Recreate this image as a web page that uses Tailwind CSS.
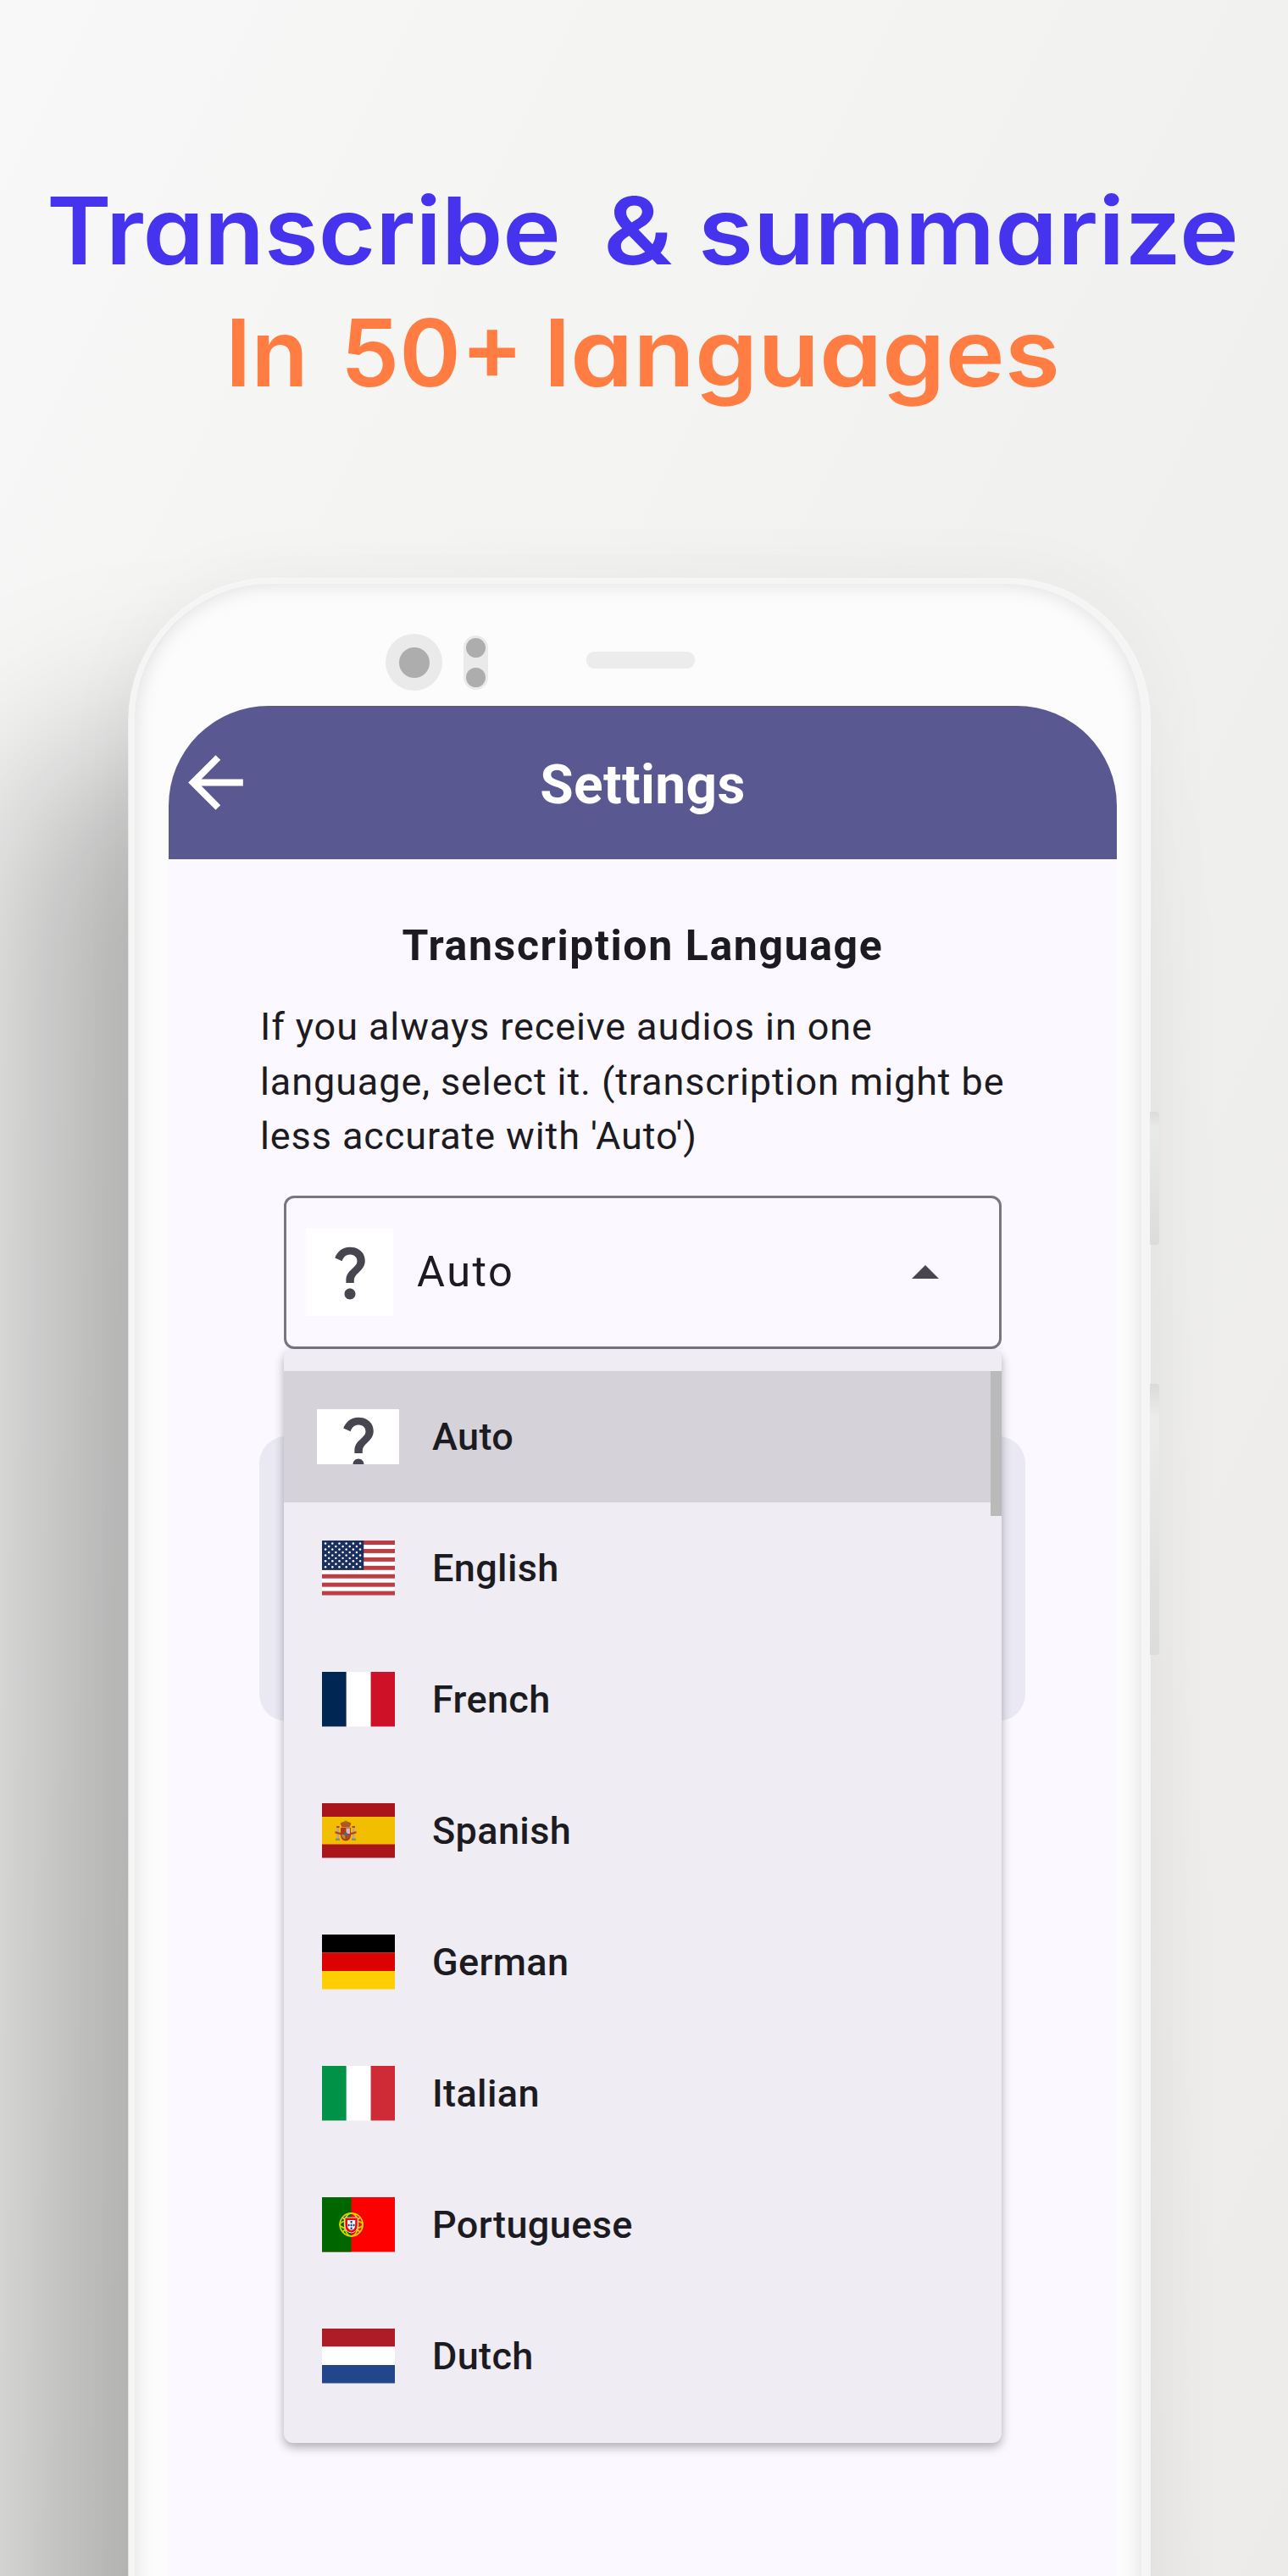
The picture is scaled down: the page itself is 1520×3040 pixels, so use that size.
<!DOCTYPE html>
<html lang="en">
<head>
<meta charset="utf-8">
<title>Settings</title>
<script src="https://cdn.jsdelivr.net/npm/@tailwindcss/browser@4"></script>
</head>
<body class="w-[1520px] h-[3040px] overflow-hidden bg-linear-to-br from-[#f8f8f8] via-[#f1f1ef] to-[#ecebe9] font-['Roboto',sans-serif] text-[#1b1b21]">
<div class="flex flex-col items-center h-[3040px] overflow-hidden relative">
  <header class="h-[683px] w-full shrink-0 pt-[200px] text-[110px] leading-[144px] font-semibold font-['Inter',sans-serif] [font-feature-settings:'cv11'] whitespace-nowrap">
    <h1 class="flex pl-[55px] text-[#4633ed]">
      <span class="w-[657px]"><span class="inline-block origin-left scale-x-[1.055]">Transcribe</span></span>
      <span class="w-[112px]"><span class="inline-block origin-left scale-x-[1.12]">&amp;</span></span>
      <span class="inline-block origin-left scale-x-[1.075]">summarize</span>
    </h1>
    <h2 class="flex pl-[266px] text-[#ff7d42]">
      <span class="w-[136px]">In</span>
      <span class="w-[240px]">50+</span>
      <span class="inline-block origin-left scale-x-[1.08]">languages</span>
    </h2>
  </header>

  <main class="relative ml-[-11px] w-[1205px] h-[2900px] shrink-0 rounded-t-[168px] border-t-[6px] border-l-[7px] border-r-[10px] border-[#f5f5f5] bg-[#fcfcfc] shadow-[0_0_0_1px_rgba(255,255,255,0.6),0_0_90px_rgba(0,0,0,0.045),-145px_190px_210px_rgba(0,0,0,0.26)]">
    <div class="absolute -right-[21px] top-[623px] w-[11px] h-[157px] rounded-r bg-linear-to-b from-[#dcdcdc] via-[#e9eaea] via-12% to-[#dcdcdc]"></div>
    <div class="absolute -right-[21px] top-[944px] w-[11px] h-[320px] rounded-r bg-linear-to-b from-[#dadada] via-[#ececec] via-12% to-[#dcdcdc]"></div>
    <div class="h-full rounded-t-[160px] shadow-[inset_0_0_24px_rgba(0,0,0,0.13)] pl-10 pr-[29px]">
      <div class="h-[144px] relative">
        <div class="absolute left-[256px] top-[59px] size-[67px] rounded-full bg-[#eaeaea] flex items-center justify-center"><div class="size-9 rounded-full bg-[#adadad]"></div></div>
        <div class="absolute left-[348px] top-[61px] w-[29px] h-16 rounded-full bg-[#eaeaea] flex flex-col items-center justify-between py-[3px]"><div class="size-[23px] rounded-full bg-[#adadad]"></div><div class="size-[23px] rounded-full bg-[#adadad]"></div></div>
        <div class="absolute left-[493px] top-20 w-32 h-5 rounded-[9px] bg-[#ececec]"></div>
      </div>
      <section class="w-[1119px] h-[2700px] rounded-t-[118px] overflow-hidden bg-[#fbf8ff]">
        <div class="h-[181px] bg-[#5a5891] text-white flex items-center relative">
          <svg class="size-[97px] ml-[7px]" viewBox="0 0 24 24" fill="#fff"><path d="M20 11H7.83l5.59-5.59L12 4l-8 8 8 8 1.41-1.41L7.83 13H20z"/></svg>
          <div class="absolute inset-0 flex justify-center pt-[56px] text-[64px] leading-[76px] font-bold tracking-[0.4px]"><span>Settings</span></div>
        </div>
        <div class="pt-[62px] px-[107px]">
          <h3 class="text-center text-[50px] leading-[80px] font-bold tracking-[1.6px]">Transcription Language</h3>
          <p class="mt-6 ml-px text-[45px] leading-[64.6px] whitespace-nowrap tracking-[0.9px]">If you always receive audios in one<br>language, select it. (transcription might be<br>less accurate with 'Auto')</p>
        </div>
        <div class="relative mt-[37px] ml-[136px] w-[847px]">
          <div class="absolute left-[-29px] top-[284px] w-[904px] h-[336px] rounded-[32px] bg-[#eae8f3]"></div>
          <div class="relative h-[181px] rounded-[12px] border-[3.5px] border-[#787680] flex items-center pl-[23px] pr-[71px]">
            <div class="size-[103px] bg-white flex items-center justify-center">
              <svg class="size-[78px]" viewBox="0 0 24 24" fill="#47464f"><path d="M11.07 12.85c.77-1.39 2.25-2.21 3.11-3.44.91-1.29.4-3.7-2.18-3.7-1.69 0-2.52 1.28-2.87 2.34L6.54 6.96C7.25 4.83 9.18 3 11.99 3c2.35 0 3.96 1.07 4.78 2.41.7 1.15 1.11 3.3.03 4.9-1.2 1.77-2.35 2.31-2.97 3.45-.25.46-.35.76-.35 2.24h-2.89c-.01-.78-.13-2.05.48-3.15zM14 20c0 1.1-.9 2-2 2s-2-.9-2-2 .9-2 2-2 2 .9 2 2z"/></svg>
            </div>
            <span class="ml-[28px] text-[50.5px] tracking-[2.5px]">Auto</span>
            <svg class="ml-auto w-8 h-4" viewBox="0 0 10 5" fill="#47464f"><path d="M0 5l5-5 5 5z"/></svg>
          </div>
          <ul class="relative h-[1291px] pt-[26.5px] rounded-[11px] bg-[#efecf3] shadow-[0_5px_12px_rgba(0,0,0,0.3)] text-[45px] font-medium tracking-[0.4px]">
            <li class="h-[155px] bg-[#d5d2d9] flex items-center pl-[39px]">
              <div class="w-[97px] h-[65px] bg-white overflow-hidden flex justify-center">
                <svg class="size-[78px] shrink-0" viewBox="0 0 24 24" fill="#47464f"><path d="M11.07 12.85c.77-1.39 2.25-2.21 3.11-3.44.91-1.29.4-3.7-2.18-3.7-1.69 0-2.52 1.28-2.87 2.34L6.54 6.96C7.25 4.83 9.18 3 11.99 3c2.35 0 3.96 1.07 4.78 2.41.7 1.15 1.11 3.3.03 4.9-1.2 1.77-2.35 2.31-2.97 3.45-.25.46-.35.76-.35 2.24h-2.89c-.01-.78-.13-2.05.48-3.15zM14 20c0 1.1-.9 2-2 2s-2-.9-2-2 .9-2 2-2 2 .9 2 2z"/></svg>
              </div><span class="ml-[39px]">Auto</span></li>
            <li class="h-[155px] flex items-center pl-[44.5px]"><svg id="us" class="w-[86.4px] h-[64.6px]" viewBox="0 0 86 65" preserveAspectRatio="none"></svg><span class="ml-[44px]">English</span></li>
            <li class="h-[155px] flex items-center pl-[44.5px]"><svg class="w-[86.4px] h-[64.6px]" viewBox="0 0 3 2" preserveAspectRatio="none"><path fill="#002654" d="M0 0h1v2H0z"/><path fill="#fff" d="M1 0h1v2H1z"/><path fill="#ce1126" d="M2 0h1v2H2z"/></svg><span class="ml-[44px]">French</span></li>
            <li class="h-[155px] flex items-center pl-[44.5px]"><svg class="w-[86.4px] h-[64.6px]" viewBox="0 0 86.4 64.6"><path fill="#aa151b" d="M0 0h86.4v64.6H0z"/><path fill="#f1bf00" d="M0 16h86.4v32.5H0z"/>
              <path fill="#c4a38a" d="M17.500 28h2.500v16h-2.500zM36 28h2.500v16H36z"/><path fill="#b5452f" d="M15.500 33l7 2v2.500l-7-2zM33.500 35l7-2v2.500l-7 2zM17 27h3.500v2H17zM35.500 27H39v2h-3.500z"/><path fill="#8f8f70" d="M16 41.500h5V44h-5zM35 41.500h5V44h-5z"/><path fill="#b5541f" d="M22 25q-1-2 2-2.500l4-1.500 4 1.500q3 .5 2 2.500l-1.500 3.500h-9z"/><path fill="#8c7a2a" d="M27.200 20.500h1.600v4h-1.600z"/><path fill="#ad3a20" d="M22 29h12v9.500q-1 6-6 6t-6-6z"/><path fill="#d6b9c6" d="M28.500 29.500H33V36h-4.500z"/><path fill="#c08a20" d="M23 37h4.500v5.500q-4-1-4.500-5.500z"/><path fill="#a84a38" d="M29 37h4q0 4-4 6z"/><circle cx="28" cy="36.300" r="2" fill="#3f6a8c"/></svg><span class="ml-[44px]">Spanish</span></li>
            <li class="h-[155px] flex items-center pl-[44.5px]"><svg class="w-[86.4px] h-[64.6px]" viewBox="0 0 3 3" preserveAspectRatio="none"><path d="M0 0h3v1H0z"/><path fill="#d00" d="M0 1h3v1H0z"/><path fill="#ffce00" d="M0 2h3v1H0z"/></svg><span class="ml-[44px]">German</span></li>
            <li class="h-[155px] flex items-center pl-[44.5px]"><svg class="w-[86.4px] h-[64.6px]" viewBox="0 0 3 2" preserveAspectRatio="none"><path fill="#009246" d="M0 0h1v2H0z"/><path fill="#fff" d="M1 0h1v2H1z"/><path fill="#ce2b37" d="M2 0h1v2H2z"/></svg><span class="ml-[44px]">Italian</span></li>
            <li class="h-[155px] flex items-center pl-[44.5px]"><svg class="w-[86.4px] h-[64.6px]" viewBox="0 0 86.4 64.6"><path fill="#f00" d="M0 0h86.4v64.6H0z"/><path fill="#060" d="M0 0h34.600v64.6H0z"/><g fill="none" stroke="#d8d800" stroke-width="1.700"><circle cx="34.600" cy="32.300" r="13.500"/><ellipse cx="34.600" cy="32.300" rx="13.500" ry="5"/><ellipse cx="34.600" cy="32.300" rx="8" ry="13.500"/><path d="M24 24l21 17M24 41l21-17"/></g><path fill="#f00" stroke="#fff" stroke-width=".8" d="M27 24h15.200v9q0 8-7.600 9-7.600-1-7.600-9z"/><path fill="#fff" d="M30 27h9.200v6q0 5-4.600 6-4.600-1-4.600-6z"/><path fill="#039" d="M33.600 28h2v2.500h-2zM33.600 31.800h2v2.500h-2zM33.600 35.500h2V38h-2zM30.700 31.800h1.800v2.500h-1.800zM36.700 31.800h1.800v2.500h-1.800z"/></svg><span class="ml-[44px]">Portuguese</span></li>
            <li class="h-[155px] flex items-center pl-[44.5px]"><svg class="w-[86.4px] h-[64.6px]" viewBox="0 0 3 3" preserveAspectRatio="none"><path fill="#ae1c28" d="M0 0h3v1H0z"/><path fill="#fff" d="M0 1h3v1H0z"/><path fill="#21468b" d="M0 2h3v1H0z"/></svg><span class="ml-[44px]">Dutch</span></li>
            <li class="absolute right-0 top-[26.5px] w-[13px] h-[171px] bg-[#bababa]"></li>
          </ul>
        </div>
      </section>
    </div>
  </main>
</div>
<script>
// Stripes and stars of the US flag
var s='<path fill="#fff" d="M0 0h86v65H0z"/>';
for(var i=0;i<13;i+=2)s+='<rect y="'+i*5+'" width="86" height="5" fill="#bd3d44"/>';
s+='<path fill="#192f5d" d="M0 0h49v35H0z"/>';
for(var r=0;r<9;r++)for(var c=0;c<(r%2?5:6);c++)s+='<circle cx="'+(4.1+c*8.15+(r%2?4.07:0))+'" cy="'+(3.500+r*3.500)+'" r="1.25" fill="#fff"/>';
document.getElementById('us').innerHTML=s;
</script>
</body>
</html>
